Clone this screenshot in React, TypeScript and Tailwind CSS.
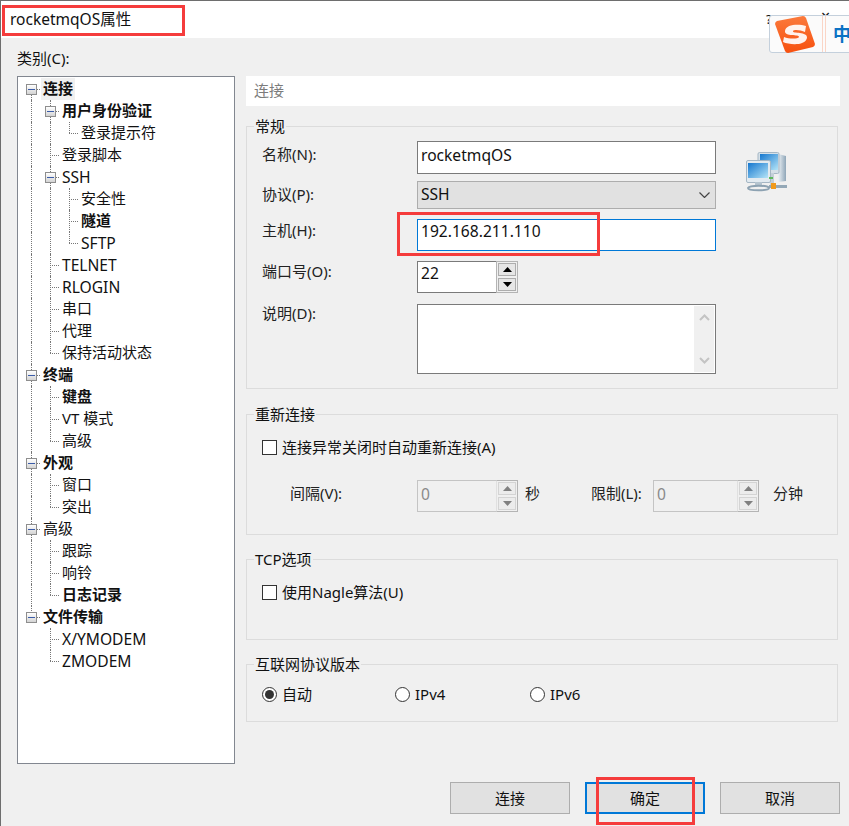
import React from 'react';

type TreeNode = { label: string; bold?: boolean; children?: TreeNode[] };

type TreeRow = TreeNode & { guides: boolean[]; isLast: boolean; isFirst: boolean };

const tree: TreeNode[] = [
  {
    label: '连接',
    bold: true,
    children: [
      { label: '用户身份验证', bold: true, children: [{ label: '登录提示符' }] },
      { label: '登录脚本' },
      {
        label: 'SSH',
        children: [{ label: '安全性' }, { label: '隧道', bold: true }, { label: 'SFTP' }],
      },
      { label: 'TELNET' },
      { label: 'RLOGIN' },
      { label: '串口' },
      { label: '代理' },
      { label: '保持活动状态' },
    ],
  },
  {
    label: '终端',
    bold: true,
    children: [{ label: '键盘', bold: true }, { label: 'VT 模式' }, { label: '高级' }],
  },
  { label: '外观', bold: true, children: [{ label: '窗口' }, { label: '突出' }] },
  { label: '高级', children: [{ label: '跟踪' }, { label: '响铃' }, { label: '日志记录', bold: true }] },
  { label: '文件传输', bold: true, children: [{ label: 'X/YMODEM' }, { label: 'ZMODEM' }] },
];

const flatten = (nodes: TreeNode[], guides: boolean[] = []): TreeRow[] =>
  nodes.flatMap((node, i) => {
    const isLast = i === nodes.length - 1;
    const row = { ...node, guides, isLast, isFirst: guides.length === 0 && i === 0 };
    return [row, ...flatten(node.children ?? [], [...guides, !isLast])];
  });

const Toggle = () => (
  <span className="absolute left-[4px] top-[6px] flex h-[11px] w-[11px] items-center justify-center border border-[#8e8e8e] bg-gradient-to-b from-white to-[#d4d4d4]">
    <span className="h-px w-[7px] bg-[#3b5ca8]" />
  </span>
);

const Row = ({ row }: { row: TreeRow }) => {
  const lineClass = 'absolute left-[9px] border-l border-dotted border-[#777]';
  const latin = /^[\x00-\x7f]+$/.test(row.label);
  return (
    <div className="flex h-[22px] pl-[4px]">
      {row.guides.map((on, i) => (
        <div key={i} className="relative h-full w-[19px] shrink-0">
          {on && <span className={`${lineClass} top-0 bottom-0`} />}
        </div>
      ))}
      <div className="relative h-full w-[19px] shrink-0">
        {row.isFirst ? (
          <span className={`${lineClass} top-[11px] bottom-0`} />
        ) : (
          <span className={`${lineClass} top-0 ${row.isLast ? 'h-[11px]' : 'bottom-0'}`} />
        )}
        <span className="absolute left-[9px] top-[11px] w-[9px] border-t border-dotted border-[#777]" />
        {row.children && <Toggle />}
      </div>
      <span
        className={`h-[22px] px-[2px] whitespace-nowrap text-[#111] ${
          latin ? 'text-[15.6px] leading-[22px]' : 'text-[15px] leading-[20px]'
        } ${row.bold ? 'font-bold' : ''} ${row.isFirst ? 'bg-[#f0f0f0]' : ''}`}
      >
        {row.label}
      </span>
    </div>
  );
};

const Group = ({ title, className, children }: { title: string; className: string; children: React.ReactNode }) => (
  <div className={`w-[592px] border border-[#dcdcdc] ${className}`}>
    <div className="-mt-[11px] ml-[7px] h-[22px] w-fit bg-[#f0f0f0] px-px text-[15px] leading-[20px]">{title}</div>
    {children}
  </div>
);

const Arrow = ({ up, color }: { up?: boolean; color: string }) => (
  <svg width="9" height="5" viewBox="0 0 9 5" fill={color}>
    {up ? <path d="M4.5 0 9 5H0z" /> : <path d="M0 0h9L4.5 5z" />}
  </svg>
);

const Spinner = ({ value, disabled, className }: { value: string; disabled?: boolean; className: string }) => (
  <div className={`flex h-[32px] shrink-0 ${className}`}>
    <div
      className={`flex-1 border border-r-0 pl-[3px] text-[15.6px] ${
        disabled ? 'border-[#c4c4c4] leading-[26px] text-[#8a8a8a]' : 'border-[#7a7a7a] bg-white leading-[22px] text-[#111]'
      }`}
    >
      {value}
    </div>
    <div
      className={`flex w-[22px] flex-col justify-between border p-px ${
        disabled ? 'border-[#b4b4b4] border-l-[#e0e0e0]' : 'border-[#b4b4b4]'
      }`}
    >
      {[true, false].map(up => (
        <div
          key={String(up)}
          className={`flex h-[13px] items-center justify-center border ${
            disabled ? 'border-[#d4d4d4] bg-[#ececec]' : 'border-[#adadad] bg-[#e6e6e6]'
          }`}
        >
          <Arrow up={up} color={disabled ? '#808080' : '#000'} />
        </div>
      ))}
    </div>
  </div>
);

const Field = ({ label, top, children }: { label: string; top: string; children: React.ReactNode }) => (
  <div className="flex">
    <span className={`w-[170px] shrink-0 pl-[15px] text-[15px] leading-[20px] text-[#222] ${top}`}>{label}</span>
    {children}
  </div>
);

const Checkbox = ({ label, className }: { label: string; className: string }) => (
  <div className={`flex items-center pl-[15px] ${className}`}>
    <span className="h-[15px] w-[15px] border border-[#333] bg-white" />
    <span className="ml-[5px] text-[15px] leading-[20px]">{label}</span>
  </div>
);

const Radio = ({ label, checked, className }: { label: string; checked?: boolean; className: string }) => (
  <div className={`flex items-center ${className}`}>
    <span className="flex h-[15px] w-[15px] items-center justify-center rounded-full border border-[#333] bg-white">
      {checked && <span className="h-[9px] w-[9px] rounded-full bg-[#333]" />}
    </span>
    <span className="ml-[5px] text-[15px] leading-[20px]">{label}</span>
  </div>
);

const Button = ({ label, focused }: { label: string; focused?: boolean }) => (
  <div
    className={`flex h-[32px] w-[120px] items-center justify-center bg-[#e1e1e1] text-[15px] ${
      focused ? 'border-2 border-[#0078d7]' : 'border border-[#adadad]'
    }`}
  >
    {label}
  </div>
);

const NetworkIcon = () => (
  <svg width="41" height="40" viewBox="0 0 41 40" className="mt-[11px] ml-[29px] shrink-0">
    <defs>
      <linearGradient id="scr" x1="0" y1="0" x2="1" y2="1">
        <stop offset="0" stopColor="#1577cf" />
        <stop offset="1" stopColor="#b4e4f7" />
      </linearGradient>
      <linearGradient id="body" x1="0" y1="0" x2="1" y2="0">
        <stop offset="0" stopColor="#eef3f7" />
        <stop offset="1" stopColor="#8fa6b8" />
      </linearGradient>
    </defs>
    <path d="M32 2l8 2v25l-8 1z" fill="url(#body)" />
    <rect x="12" y="0.500" width="21" height="21" rx="1.500" fill="#d5e0e8" stroke="#a5b6c4" />
    <rect x="14" y="2" width="18" height="16" fill="url(#scr)" />
    <path d="M24 21h4v12h-4z" fill="#c3cfd8" />
    <path d="M23 33h18v3H23z" fill="#94a8b7" />
    <rect x="0.500" y="8.500" width="24" height="22" rx="1.500" fill="#e2eaf0" stroke="#a5b6c4" />
    <rect x="2" y="11" width="20" height="15" fill="url(#scr)" />
    <path d="M9 30h7v4H9z" fill="#b5c4cf" />
    <path d="M2 36c2-3 19-3 21 0 0 3-21 3-21 0z" fill="none" stroke="#8da2b2" strokeWidth="2" />
    <rect x="25" y="31" width="5" height="6" fill="#f09a1c" />
    <path d="M23 25h4v2h-4z" fill="#5cb85c" />
  </svg>
);

const SogouLogo = () => (
  <svg width="40" height="37" viewBox="0 0 40 37" className="shrink-0">
    <defs>
      <linearGradient id="sg" x1="0" y1="0" x2="0" y2="1">
        <stop offset="0" stopColor="#fb7a3c" />
        <stop offset="1" stopColor="#f7500e" />
      </linearGradient>
    </defs>
    <path d="M2 5 28 0q2 0 3 2l9 26q0 2-2 3L13 37q-2 0-3-2L0 8q0-2 2-3z" fill="url(#sg)" />
    <path
      d="M31 10c-7-2-20-2-21 5-1 6 15 3 14 6-1 2-10 2-15 0l-1 5c7 3 22 4 24-4 1-7-15-4-14-7 1-2 8-1 12 1z"
      fill="#fff"
      fillOpacity="0.92"
    />
  </svg>
);

const App = () => {
  const rows = flatten(tree);

  return (
    <div className="relative h-[826px] w-[849px] overflow-hidden border-t border-l border-[#6e6e6e] bg-[#f0f0f0] font-['Noto_Sans','Noto_Sans_CJK_SC',sans-serif] text-[#111]">
      {/* title bar */}
      <div className="flex h-[37px] items-center bg-white pl-[9px] text-[15.500px]">rocketmqOS属性</div>

      <div className="pl-[16px]">
        <div className="h-[38px] pt-[9px] text-[15px] leading-[22px]">类别(C):</div>

        <div className="flex gap-[11px]">
          {/* tree */}
          <div className="h-[688px] w-[218px] shrink-0 border border-[#828790] bg-white pt-px">
            {rows.map((row, i) => (
              <Row key={i} row={row} />
            ))}
          </div>

          <div className="w-[594px]">
            <div className="h-[30px] bg-white pl-[8px] text-[15px] leading-[29px] text-[#7c7c7c]">连接</div>

            <Group title="常规" className="mt-[20px] h-[263px]">
              <div className="flex pt-[3px]">
                <div className="flex w-[470px] shrink-0 flex-col">
                  <Field label="名称(N):" top="mt-[3px]">
                    <div className="h-[33px] w-[299px] border border-[#7a7a7a] bg-white pl-[3px] text-[15.6px] leading-[26px]">
                      rocketmqOS
                    </div>
                  </Field>
                  <div className="mt-[7px]">
                    <Field label="协议(P):" top="mt-[3px]">
                      <div className="flex h-[28px] w-[299px] items-center justify-between border border-[#adadad] bg-[#e1e1e1] pr-[5px] pl-[3px] text-[15.6px]">
                        <span>SSH</span>
                        <svg width="11" height="6" viewBox="0 0 11 6" fill="none" stroke="#444" strokeWidth="1.2">
                          <path d="M.5.5l5 5 5-5" />
                        </svg>
                      </div>
                    </Field>
                  </div>
                  <div className="mt-[10px]">
                    <Field label="主机(H):" top="mt-[1px]">
                      <div className="h-[32px] w-[299px] border border-[#0078d7] bg-white pl-[3px] text-[15.6px] leading-[22px]">
                        192.168.211.110
                      </div>
                    </Field>
                  </div>
                  <div className="mt-[10px]">
                    <Field label="端口号(O):" top="">
                      <Spinner value="22" className="w-[101px]" />
                    </Field>
                  </div>
                  <div className="mt-[11px]">
                    <Field label="说明(D):" top="-mt-[1px]">
                      <div className="flex h-[70px] w-[299px] justify-end border border-[#7a7a7a] bg-white p-px">
                        <div className="flex w-[20px] flex-col items-center justify-between bg-[#f0f0f0] py-[8px]">
                          <svg width="11" height="7" viewBox="0 0 11 7" fill="none" stroke="#c4c4c4" strokeWidth="2">
                            <path d="M1 6l4.500-4.500L10 6" />
                          </svg>
                          <svg width="11" height="7" viewBox="0 0 11 7" fill="none" stroke="#c4c4c4" strokeWidth="2">
                            <path d="M1 1l4.500 4.500L10 1" />
                          </svg>
                        </div>
                      </div>
                    </Field>
                  </div>
                </div>
                <NetworkIcon />
              </div>
            </Group>

            <Group title="重新连接" className="mt-[25px] h-[121px]">
              <Checkbox label="连接异常关闭时自动重新连接(A)" className="mt-[11px] h-[20px]" />
              <div className="mt-[23px] flex items-start text-[15px] leading-[20px] text-[#222]">
                <span className="mt-[3px] w-[170px] shrink-0 pl-[43px]">间隔(V):</span>
                <Spinner value="0" disabled className="w-[101px]" />
                <span className="mt-[3px] ml-[7px] w-[66px] shrink-0">秒</span>
                <span className="mt-[3px] w-[62px] shrink-0">限制(L):</span>
                <Spinner value="0" disabled className="w-[106px]" />
                <span className="mt-[3px] ml-[14px]">分钟</span>
              </div>
            </Group>

            <Group title="TCP选项" className="mt-[24px] h-[81px]">
              <Checkbox label="使用Nagle算法(U)" className="mt-[11px] h-[20px]" />
            </Group>

            <Group title="互联网协议版本" className="mt-[24px] h-[58px]">
              <div className="mt-[8px] flex h-[20px] pl-[15px]">
                <Radio label="自动" checked className="w-[133px]" />
                <Radio label="IPv4" className="w-[135px]" />
                <Radio label="IPv6" className="" />
              </div>
            </Group>

            <div className="mt-[60px] flex justify-end gap-[15px]">
              <Button label="连接" />
              <Button label="确定" focused />
              <Button label="取消" />
            </div>
          </div>
        </div>
      </div>

      {/* caption buttons peeking out from behind the IME bar */}
      <span className="absolute top-[11px] left-[765px] text-[13px] leading-[14px]">?</span>
      <span className="absolute top-[8px] left-[820px] text-[16px] leading-[14px]">×</span>

      {/* sogou IME bar */}
      <div className="absolute top-[14px] left-[768px] flex h-[38px] w-[90px] items-center rounded-[3px] border border-[#c4d0dc] bg-[#fbfbfb] pl-[5px]">
        <SogouLogo />
        <span className="ml-[7px] h-full w-[4px] border-x border-[#fad5c6]" />
        <span className="ml-[7px] text-[18px] font-bold text-[#0b72c4]">中</span>
      </div>

      {/* red annotation boxes */}
      <div className="absolute top-[4px] left-[1px] h-[31px] w-[183px] border-[3px] border-[#f53c3c]" />
      <div className="absolute top-[211px] left-[396px] h-[44px] w-[203px] border-[3px] border-[#f53c3c]" />
      <div className="absolute top-[776px] left-[595px] h-[48px] w-[99px] border-[3px] border-[#f53c3c]" />
    </div>
  );
};

export default App;
